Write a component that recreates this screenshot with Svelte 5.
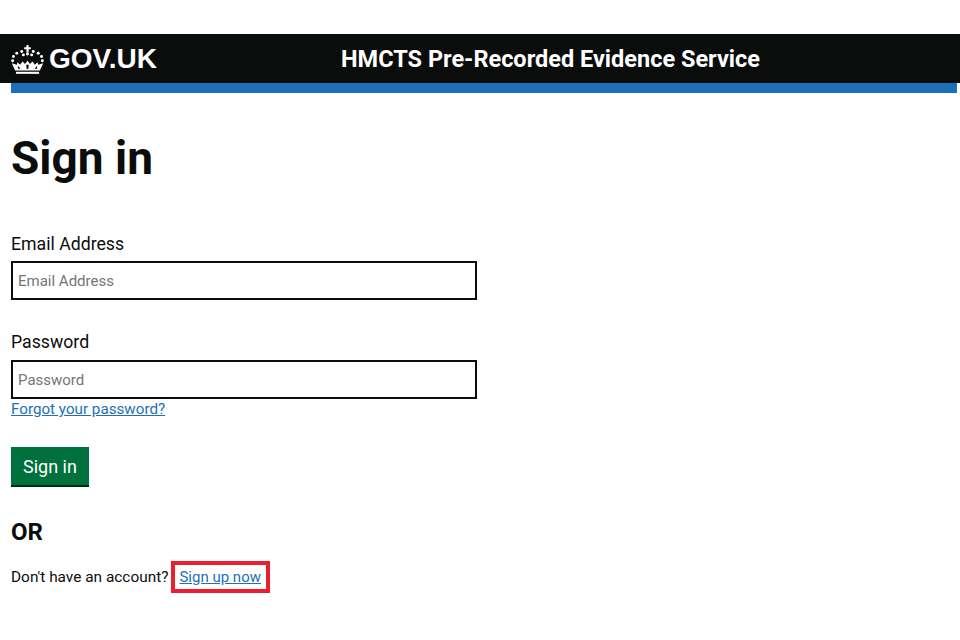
<script>
  const dots = [[3,15],[7,11],[13,9],[27,9],[33,11],[37,15],[2,20],[38,20],[15,13],[25,13],[20,12]];
</script>

<div class="page">
  <header class="topbar">
    <div class="brand">
      <svg class="crown" viewBox="0 0 40 36" width="33" height="30" aria-hidden="true">
        <path d="M18.700 1h2.600v2.700H24v2.600h-2.700V10h-2.600V6.300H16V3.700h2.700z" fill="#fff"/>
        {#each dots as d}
          <circle cx={d[0]} cy={d[1]} r="1.800" fill="#fff"/>
        {/each}
        <path d="M1 23l6 2 1-3 3 3 3-4 3 3 3-4 3 4 3-3 3 4 3-3 1 3 6-2-4 9H5z" fill="#fff"/>
        <path d="M8 27h1.500l1.500 3H9zM18.500 25h3l-.5 5h-2zM30.500 27H32l-1 3h-2z" fill="#0b0c0c"/>
        <path d="M6 33.500h28V36H6z" fill="#fff"/>
      </svg>
      <span class="wordmark">GOV.UK</span>
    </div>
    <div class="service">HMCTS Pre-Recorded Evidence Service</div>
  </header>
  <div class="stripe"></div>

  <main class="content">
    <h1>Sign in</h1>

    <form class="form" onsubmit={(e) => e.preventDefault()}>
      <div class="field">
        <label for="email">Email Address</label>
        <input id="email" type="text" placeholder="Email Address" />
      </div>

      <div class="field second">
        <label for="password">Password</label>
        <input id="password" type="password" placeholder="Password" />
        <a class="forgot" href="#forgot">Forgot your password?</a>
      </div>

      <button type="submit">Sign in</button>
    </form>

    <h2>OR</h2>
    <p class="signup">
      <span class="prompt">Don't have an account?</span>
      <span class="highlight"><a href="#signup">Sign up now</a></span>
    </p>
  </main>
</div>

<style>
  :global(body) {
    margin: 0;
    background: #fff;
  }
  .page {
    padding-top: 34px;
    font-family: Roboto, "Noto Sans", sans-serif;
    color: #0b0c0c;
  }
  .topbar {
    height: 49px;
    background: #0b0c0c;
    color: #fff;
    display: flex;
    align-items: center;
    padding-left: 11px;
    box-sizing: border-box;
  }
  .brand {
    display: flex;
    align-items: center;
    gap: 5px;
    width: 330px;
  }
  .crown {
    display: block;
  }
  .wordmark {
    font-family: "Liberation Sans", Arial, sans-serif;
    font-weight: 700;
    font-size: 28px;
    line-height: 1;
  }
  .service {
    font-weight: 700;
    font-size: 23.500px;
    line-height: 1;
    white-space: nowrap;
    padding-top: 2px;
  }
  .stripe {
    height: 10px;
    margin: 0 3px 0 11px;
    background: #1d70b8;
  }
  .content {
    padding: 0 11px;
  }
  h1 {
    margin: 37px 0 0;
    font-size: 46px;
    line-height: 56px;
    font-weight: 700;
  }
  .form {
    margin-top: 45px;
    display: flex;
    flex-direction: column;
    align-items: flex-start;
  }
  .field {
    display: flex;
    flex-direction: column;
    align-items: flex-start;
  }
  .second {
    margin-top: 29px;
  }
  label {
    font-size: 17.700px;
    line-height: 26px;
    margin-bottom: 4px;
  }
  .second label {
    margin-bottom: 5px;
  }
  input {
    box-sizing: border-box;
    width: 466px;
    height: 39px;
    border: 2px solid #0b0c0c;
    border-radius: 0;
    padding: 0 5px;
    font: inherit;
    font-size: 15px;
    background: #fff;
    outline: none;
  }
  input::placeholder {
    color: #757575;
    opacity: 1;
  }
  .forgot {
    font-size: 15.200px;
    line-height: 20px;
    color: #1d70b8;
  }
  button {
    margin-top: 28px;
    height: 40px;
    width: 78px;
    padding: 0;
    border: 0;
    border-bottom: 2px solid #002d18;
    background: #00703c;
    color: #fff;
    font: inherit;
    font-size: 18px;
    box-sizing: border-box;
  }
  h2 {
    margin: 30px 0 0;
    font-size: 24px;
    line-height: 30px;
    font-weight: 700;
  }
  .signup {
    margin: 14px 0 0;
    font-size: 15px;
    display: flex;
    align-items: center;
    gap: 3px;
  }
  .prompt {
    font-size: 15.400px;
  }
  .highlight {
    border: 4px solid #ed1c2e;
    padding: 2px 5px 2px 4px;
    line-height: 20px;
  }
  .highlight a {
    color: #1d70b8;
  }
</style>
